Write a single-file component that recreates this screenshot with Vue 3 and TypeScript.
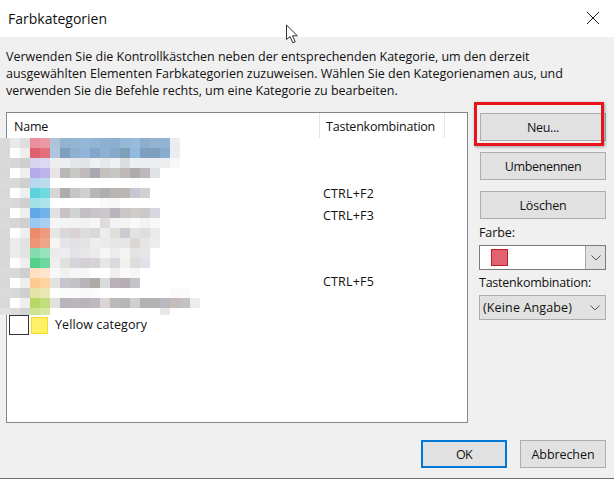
<script setup lang="ts">
interface Category {
  name: string
  color: string
  edge: string
  shortcut: string
}

const categories: Category[] = [
  { name: '', color: '', edge: '', shortcut: '' },
  { name: '', color: '', edge: '', shortcut: '' },
  { name: '', color: '', edge: '', shortcut: 'CTRL+F2' },
  { name: '', color: '', edge: '', shortcut: 'CTRL+F3' },
  { name: '', color: '', edge: '', shortcut: '' },
  { name: '', color: '', edge: '', shortcut: '' },
  { name: '', color: '', edge: '', shortcut: 'CTRL+F5' },
  { name: '', color: '', edge: '', shortcut: '' },
  { name: 'Yellow category', color: '#fff066', edge: '#f6d92a', shortcut: '' },
]

// redacted names in the reference: one row of 10px blocks per string
const mosaic: string[] = [
  'd9d9d9 e9e9e9 dedede e8909b ea98a3 adc4d8 92b4d2 93b6d4 93b8d8 92b5d5 8eb0cf 8cafcf 93b8d8 97bcdb 8eadca 92b3d2 92b3d2 e8edf1',
  'd8d8d8 ffffff eeeeee e05f6c e2707c b0c6dc 7f9fc0 8fb0cf 90b5d8 83a5cb 8fafd0 86a9cc 7f9fb9 92bade 7f9fc0 7f9fbf 86add0 e8edf1',
  'd9d9d9 d6d6d6 cfcfcf d9d3f2 dcd8f3 eceef0 eceef0 e4e6e8 e2e4ea eef0f1 e6e8ea eef0f1 dcdde2 eceef0 eceef0 eceef0 eceef0 f8f8f8',
  'd8d8d8 ffffff eeeeee b3aae8 bcb4ea e6e4e4 bab6b6 c8c8c4 c0b8bc a8a6ae c6c0c0 c6c6c6 bfb8b6 aeaaaa bdb8ba e0e2e6 ffffff ffffff',
  'dadada d8d8d8 cfcfcf b5d8ec bcdcee ffffff ffffff ffffff ffffff ffffff ffffff ffffff ffffff fbfbfb ffffff ffffff ffffff ffffff',
  'd8d8d8 ffffff eeeeee 5cd2dc 70dae0 d8d6d4 b0acaa c6c6c8 cfcfcf bab6b4 acaeb2 b9b5b4 bab6b2 c8c6d2 d2d0ce ffffff ffffff ffffff',
  'dadada d8d8d8 cfcfcf a2e0ea ace4ec ffffff ffffff ffffff ffffff ffffff fbf9f8 f6f7f9 ffffff ffffff ffffff ffffff ffffff ffffff',
  'd8d8d8 ffffff eeeeee 62a8e8 72b2ec e2e0e0 cac2c4 d0d4d2 c4bec2 c8c4cc ccc6c8 b8b4bc c8c6c6 cfcdca cac8ca d8d6de ffffff ffffff',
  'dadada d6d6d6 cfcfcf 9cc8f0 a8cef2 f5f5f5 f3f3f3 f3f3f3 f1f1f1 f6f6f6 deddda f1f2f4 f3f3f3 f9f9f7 f3f3f3 f8f8f8 ffffff ffffff',
  'd8d8d8 ffffff eeeeee ec8b6c ee9a7e e8e6e2 d8d8da dad2d2 dcdce0 d8d8d8 ececee dedfdb cbcbd2 e4e2e0 dedee0 eaeae8 ffffff ffffff',
  'd8d8d8 ebebeb e2e2e2 ee9476 f0a488 f5f5f3 e5e5e7 e2e0e2 e3e3e1 eeeeee eaeaec e6e6e6 e6e6e6 d9d6d4 e6e6e8 ececea ffffff ffffff',
  'd8d8d8 ebebeb e2e2e2 84dcac 98e2bc ebebeb eeeeee e4e2e6 e8e6e6 ebebeb f6f6f8 ececee f3f3f3 e4e4e4 e6e6ea ffffff ffffff ffffff',
  'd8d8d8 ffffff eeeeee 54d08c 6cd8a0 eeeeee e0e0dc d8d4dc d4d0d6 d4d4d6 e6e6e6 dadade f1f0ee dedddb e2e0ea ffffff ffffff ffffff',
  'dadada d8d8d8 cfcfcf ffe0c0 ffe4cc f8f8f8 f1f1f1 f6f6f6 f6f6f6 ffffff ffffff f0eef0 fafafa f6f6f6 ffffff ffffff ffffff ffffff',
  'd8d8d8 ffffff eeeeee ffca8e ffd29e e2e2de c6c4cc c4c2c6 b8b4bc aeaaa4 d8dcdc bab0b8 b4b0b2 c2c4ca ffffff ffffff ffffff ffffff',
  'dadada d8d8d8 cfcfcf e6e2a8 eae6b4 fdfdfd fbfbfb fbfbfb f9f9f9 fbfbfb ffffff ffffff ffffff ffffff ffffff ffffff ffffff fbfbfb fbfbfb',
  'd8d8d8 ffffff eeeeee b6d864 c2de7c e0e0dc b6b4bc bcb6ba bab4b8 bab8c0 dcd4d6 bcbab6 b6b8b8 d0ced2 b4b2b0 b2b2b0 bab8c0 c6bcbc c2c2c2 ebebf0',
  'e0e0e0 dcdcdc d4d4d4 cce494 d4e8a4 ffffff ffffff ffffff ffffff ffffff ffffff ffffff ffffff ffffff ffffff ffffff e8e8e8 ffffff',
]
</script>

<template>
  <div class="dialog">
    <header class="titlebar">
      <span class="title">Farbkategorien</span>
      <svg class="close" width="14" height="14" viewBox="0 0 14 14">
        <path d="M1 1 L13 13 M13 1 L1 13" stroke="#1a1a1a" stroke-width="1" fill="none" />
      </svg>
    </header>

    <main class="body">
      <p class="intro">
        Verwenden Sie die Kontrollkästchen neben der entsprechenden Kategorie, um den derzeit<br />
        ausgewählten Elementen Farbkategorien zuzuweisen. Wählen Sie den Kategorienamen aus, und<br />
        verwenden Sie die Befehle rechts, um eine Kategorie zu bearbeiten.
      </p>

      <div class="content">
        <section class="list">
          <div class="list-head">
            <div class="col-name">Name</div>
            <div class="col-key">Tastenkombination</div>
            <div class="col-rest"></div>
          </div>
          <div v-for="(cat, i) in categories" :key="i" class="row">
            <div class="row-name">
              <template v-if="cat.name">
                <span class="check"></span>
                <span class="swatch" :style="{ background: cat.color, borderColor: cat.edge }"></span>
                <span class="label">{{ cat.name }}</span>
              </template>
            </div>
            <div class="row-key">{{ cat.shortcut }}</div>
          </div>
        </section>

        <aside class="side">
          <button class="btn btn-new">Neu...</button>
          <button class="btn btn-rename">Umbenennen</button>
          <button class="btn btn-delete">Löschen</button>
          <label class="field-label farbe">Farbe:</label>
          <div class="color-select">
            <span class="color-chip"></span>
            <span class="color-arrow">
              <svg width="10" height="6" viewBox="0 0 10 6">
                <path d="M0.5 0.5 L5 5 L9.5 0.5" stroke="#555" fill="none" />
              </svg>
            </span>
          </div>
          <label class="field-label taste">Tastenkombination:</label>
          <div class="key-select">
            <span>(Keine Angabe)</span>
            <svg width="10" height="6" viewBox="0 0 10 6">
              <path d="M0.5 0.5 L5 5 L9.5 0.5" stroke="#555" fill="none" />
            </svg>
          </div>
        </aside>
      </div>

      <footer class="footer">
        <button class="btn btn-ok">OK</button>
        <button class="btn btn-cancel">Abbrechen</button>
      </footer>
    </main>

    <!-- overlays: pixelated names, annotation box, mouse pointer -->
    <div class="mosaic">
      <div v-for="(line, r) in mosaic" :key="r" class="mosaic-row">
        <span
          v-for="(c, k) in line.split(' ')"
          :key="k"
          class="cell"
          :style="{ background: '#' + c }"
        ></span>
      </div>
    </div>
    <div class="annotation"></div>
    <svg class="pointer" width="14" height="20" viewBox="0 0 14 20">
      <path
        d="M1.5 1 L1.5 15.5 L5 12.5 L7.8 18.8 L10.2 17.8 L7.6 11.8 L12.4 11.8 Z"
        fill="#fff"
        stroke="#2e2e2e"
      />
    </svg>
  </div>
</template>

<style scoped>
.dialog {
  position: relative;
  width: 614px;
  height: 479px;
  display: flex;
  flex-direction: column;
  overflow: hidden;
  box-sizing: border-box;
  border-bottom: 1px solid #6e6e6e;
  background: #f0f0f0;
  color: #111;
  font-family: "Open Sans", "Noto Sans", sans-serif;
  font-size: 12.5px;
}

.titlebar {
  height: 37px;
  flex: none;
  display: flex;
  align-items: center;
  justify-content: space-between;
  padding: 0 14px 0 8px;
  background: #fff;
}

.title {
  font-size: 14px;
}

.close {
  margin-bottom: 1px;
}

.body {
  flex: 1;
  display: flex;
  flex-direction: column;
  padding: 0 8px 10px 6px;
  min-height: 0;
}

.intro {
  margin: 11px 0 0;
  height: 64px;
  line-height: 17px;
  letter-spacing: -0.02px;
  white-space: nowrap;
}

.content {
  flex: none;
  display: flex;
  height: 311px;
}

.list {
  width: 462px;
  height: 311px;
  box-sizing: border-box;
  border: 1px solid #82878f;
  background: #fff;
}

.list-head {
  display: flex;
  height: 25px;
  line-height: 27px;
}

.col-name {
  width: 313px;
  padding-left: 7px;
  box-sizing: border-box;
  border-right: 1px solid #e3e5e8;
  letter-spacing: -0.24px;
}

.col-key {
  width: 125px;
  padding-left: 6px;
  box-sizing: border-box;
  border-right: 1px solid #e3e5e8;
  letter-spacing: -0.22px;
}

.col-rest {
  flex: 1;
}

.row {
  display: flex;
  height: 22px;
  line-height: 22px;
}

.row-name {
  width: 314px;
  display: flex;
  align-items: center;
  padding-left: 2px;
}

.row-key {
  padding-top: 1px;
  letter-spacing: 0.18px;
}

.check {
  width: 20px;
  height: 20px;
  box-sizing: border-box;
  border: 1px solid #333;
  background: #fff;
}

.swatch {
  width: 17px;
  height: 17px;
  margin-left: 2px;
  box-sizing: border-box;
  border: 1px solid;
}

.label {
  margin-left: 7px;
  letter-spacing: 0.08px;
}

.side {
  width: 127px;
  margin-left: 11px;
  display: flex;
  flex-direction: column;
}

.btn {
  box-sizing: border-box;
  height: 28px;
  padding: 0;
  border: 1px solid #adadad;
  background: #e1e1e1;
  color: #111;
  font: inherit;
}

.side .btn {
  width: 126px;
  margin-left: 1px;
  margin-bottom: 11px;
}

.side .btn-new {
  margin-top: 1px;
  letter-spacing: -0.32px;
}

.btn-rename {
  letter-spacing: -0.36px;
}

.btn-delete {
  letter-spacing: -0.19px;
}

.field-label {
  line-height: 16px;
}

.farbe {
  margin-top: -5px;
  margin-bottom: 4px;
  letter-spacing: -0.08px;
}

.taste {
  margin-top: 5px;
  margin-bottom: 4px;
  letter-spacing: -0.23px;
}

.color-select {
  height: 25px;
  box-sizing: border-box;
  border: 1px solid #7a7a7a;
  background: #fff;
  display: flex;
  align-items: center;
  justify-content: space-between;
}

.color-chip {
  width: 17px;
  height: 17px;
  margin-left: 11px;
  box-sizing: border-box;
  border: 1px solid #b8202e;
  background: #e0636f;
}

.color-arrow {
  width: 20px;
  height: 23px;
  box-sizing: border-box;
  border-left: 1px solid #a8a8a8;
  background: #e1e1e1;
  display: flex;
  align-items: center;
  justify-content: center;
}

.key-select {
  height: 25px;
  box-sizing: border-box;
  border: 1px solid #adadad;
  background: #e1e1e1;
  display: flex;
  align-items: center;
  justify-content: space-between;
  padding: 0 5px 0 3px;
  letter-spacing: 0.14px;
}

.footer {
  display: flex;
  justify-content: flex-end;
  gap: 13px;
  margin-top: 17px;
}

.footer .btn {
  width: 86px;
}

.btn-ok {
  border: 2px solid #0078d7;
  letter-spacing: -0.69px;
}

.btn-cancel {
  letter-spacing: -0.07px;
}

.mosaic {
  position: absolute;
  left: 0;
  top: 138px;
  height: 177px;
  overflow: hidden;
}

.mosaic-row {
  display: flex;
  height: 10px;
}

.cell {
  width: 10px;
  height: 10px;
}

.annotation {
  position: absolute;
  left: 474px;
  top: 102px;
  width: 130px;
  height: 44px;
  box-sizing: border-box;
  border: 3px solid #e8141c;
  box-shadow: 1px 1px 3px rgba(0, 0, 0, 0.35);
}

.pointer {
  position: absolute;
  left: 285px;
  top: 24px;
}
</style>

<style>
html,
body {
  margin: 0;
  background: #f0f0f0;
}
</style>
